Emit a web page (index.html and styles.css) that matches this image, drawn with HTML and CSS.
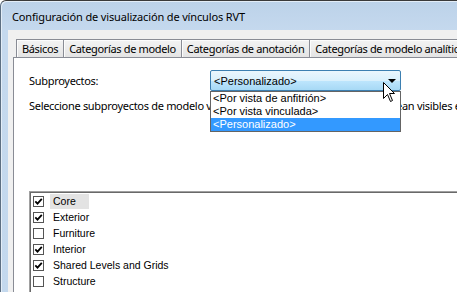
FILE: index.html
```html
<!DOCTYPE html>
<html lang="es">
<head>
  <meta charset="UTF-8" />
  <title>Configuración de visualización de vínculos RVT</title>
  <link rel="stylesheet" href="styles.css">
</head>
<body>

  <div class="window">
    <!-- Title bar -->
    <div class="titlebar">Configuración de visualización de vínculos RVT</div>

    <div class="client">
      <!-- Tabs -->
      <div class="tabs">
        <div class="tab">Básicos</div>
        <div class="tab">Categorías de modelo</div>
        <div class="tab">Categorías de anotación</div>
        <div class="tab">Categorías de modelo analítico</div>
      </div>

      <div class="tab-page">
        <div class="field-row">
          <label class="field-label">Subproyectos:</label>
          <div class="combo-wrap">
            <div class="combo">
              <span>&lt;Personalizado&gt;</span>
              <span class="combo-arrow"></span>
            </div>
            <ul class="combo-list">
              <li>&lt;Por vista de anfitrión&gt;</li>
              <li>&lt;Por vista vinculada&gt;</li>
              <li class="selected">&lt;Personalizado&gt;</li>
            </ul>
            <svg class="cursor" width="13" height="21" viewBox="0 0 13 21">
              <path d="M0.5 0.5 L0.5 16.5 L4.5 12.5 L7.5 19.5 L9.5 18.5 L6.5 11.5 L11.5 11.5 Z" fill="#fff" stroke="#000" stroke-width="1" stroke-linejoin="miter"/>
            </svg>
          </div>
        </div>

        <p class="hint">Seleccione subproyectos de modelo vinculado que desea que aparezcan y sean visibles en la vista.</p>

        <!-- Worksets list -->
        <div class="check-list">
          <div class="check-list-inner">
            <div class="check-item">
              <span class="check-box"><svg viewBox="0 0 9 9" width="9" height="9"><path d="M1.3 4.3 L3.5 6.6 L7.8 1.8" fill="none" stroke="#000" stroke-width="1.8"/></svg></span>
              <span class="check-label focused">Core</span>
            </div>
            <div class="check-item">
              <span class="check-box"><svg viewBox="0 0 9 9" width="9" height="9"><path d="M1.3 4.3 L3.5 6.6 L7.8 1.8" fill="none" stroke="#000" stroke-width="1.8"/></svg></span>
              <span class="check-label">Exterior</span>
            </div>
            <div class="check-item">
              <span class="check-box"></span>
              <span class="check-label">Furniture</span>
            </div>
            <div class="check-item">
              <span class="check-box"><svg viewBox="0 0 9 9" width="9" height="9"><path d="M1.3 4.3 L3.5 6.6 L7.8 1.8" fill="none" stroke="#000" stroke-width="1.8"/></svg></span>
              <span class="check-label">Interior</span>
            </div>
            <div class="check-item">
              <span class="check-box"><svg viewBox="0 0 9 9" width="9" height="9"><path d="M1.3 4.3 L3.5 6.6 L7.8 1.8" fill="none" stroke="#000" stroke-width="1.8"/></svg></span>
              <span class="check-label">Shared Levels and Grids</span>
            </div>
            <div class="check-item">
              <span class="check-box"></span>
              <span class="check-label">Structure</span>
            </div>
            <div class="check-item">
              <span class="check-box"></span>
            </div>
          </div>
        </div>
      </div>
    </div>
  </div>

</body>
</html>
```

FILE: styles.css
```css
body {
  margin: 0;
  width: 457px;
  height: 292px;
  overflow: hidden;
  background: #fff;
  font-family: "Noto Sans", sans-serif;
  font-size: 11px;
  color: #000;
}
.window {
  width: 640px;
  height: 330px;
  border-top: 1px solid #3a3a3a;
  border-left: 1px solid #5d6f82;
  border-top-left-radius: 6px;
  background: linear-gradient(#bcd2e9, #c5d9ee 30px, #c3d8ed);
  box-shadow: inset 1px 1px 0 #e3edf7;
  padding-left: 7px;
}
.titlebar {
  height: 26px;
  padding: 3px 0 0 4px;
  line-height: 26px;
  letter-spacing: -0.15px;
  white-space: nowrap;
}
.client {
  background: #f0f0f0;
  padding: 9px 0 0 5px;
  height: 300px;
}
.tabs {
  display: flex;
  padding-left: 3px;
}
.tab {
  height: 17px;
  line-height: 17px;
  padding: 0 5px;
  border: 1px solid #898c95;
  border-bottom: none;
  margin-left: -1px;
  background: linear-gradient(#f3f3f3, #e4e4e4);
  box-shadow: inset 1px 1px 0 #fcfcfc;
  letter-spacing: -0.35px;
  white-space: nowrap;
}
.tab:first-child {
  margin-left: 0;
}
.tab-page {
  background: #fff;
  border-top: 1px solid #898c95;
  border-left: 1px solid #898c95;
  padding: 12px 0 0 15px;
  height: 280px;
}
.field-row {
  display: flex;
  align-items: center;
}
.field-label {
  width: 181px;
  letter-spacing: -0.3px;
}
.combo-wrap {
  position: relative;
}
.combo {
  width: 182px;
  height: 19px;
  padding: 0 4px 0 3px;
  border: 1px solid #3c7fb1;
  border-radius: 2px;
  background: linear-gradient(#eaf6fd 0%, #d9f0fc 50%, #bee6fd 50%, #a7d9f5 100%);
  display: flex;
  align-items: center;
  justify-content: space-between;
  font-family: "Liberation Sans", Arial, sans-serif;
  font-size: 11px;
}
.combo-arrow {
  width: 0;
  height: 0;
  border-left: 4px solid transparent;
  border-right: 4px solid transparent;
  border-top: 4px solid #000;
}
.combo-list {
  position: absolute;
  top: 21px;
  left: 0;
  width: 189px;
  margin: 0;
  padding: 0;
  list-style: none;
  border: 1px solid #646464;
  background: #fff;
  font-family: "Liberation Sans", Arial, sans-serif;
  font-size: 11px;
  z-index: 1;
}
.combo-list li {
  height: 13px;
  line-height: 13px;
  padding-left: 2px;
  white-space: nowrap;
}
.combo-list li.selected {
  background: #3399ff;
  color: #fff;
}
.cursor {
  position: absolute;
  left: 173px;
  top: 12px;
  z-index: 2;
}
.hint {
  margin: 7px 0 0;
  line-height: 15px;
  letter-spacing: -0.3px;
  white-space: nowrap;
}
.check-list {
  margin-top: 78px;
  border-top: 1px solid #a0a0a0;
  border-left: 1px solid #a0a0a0;
  font-family: "Liberation Sans", Arial, sans-serif;
  font-size: 10.5px;
}
.check-list-inner {
  border-top: 1px solid #696969;
  border-left: 1px solid #696969;
  padding-left: 2px;
  background: #fff;
}
.check-item {
  display: flex;
  align-items: center;
  height: 16px;
}
.check-box {
  width: 9px;
  height: 9px;
  border: 1px solid #555;
  margin-right: 6px;
  background: #fff;
  display: flex;
}
.check-label {
  padding: 0 3px;
  line-height: 15px;
  white-space: nowrap;
}
.check-label.focused {
  background: #e3e3e3;
  padding-right: 13px;
}
```
